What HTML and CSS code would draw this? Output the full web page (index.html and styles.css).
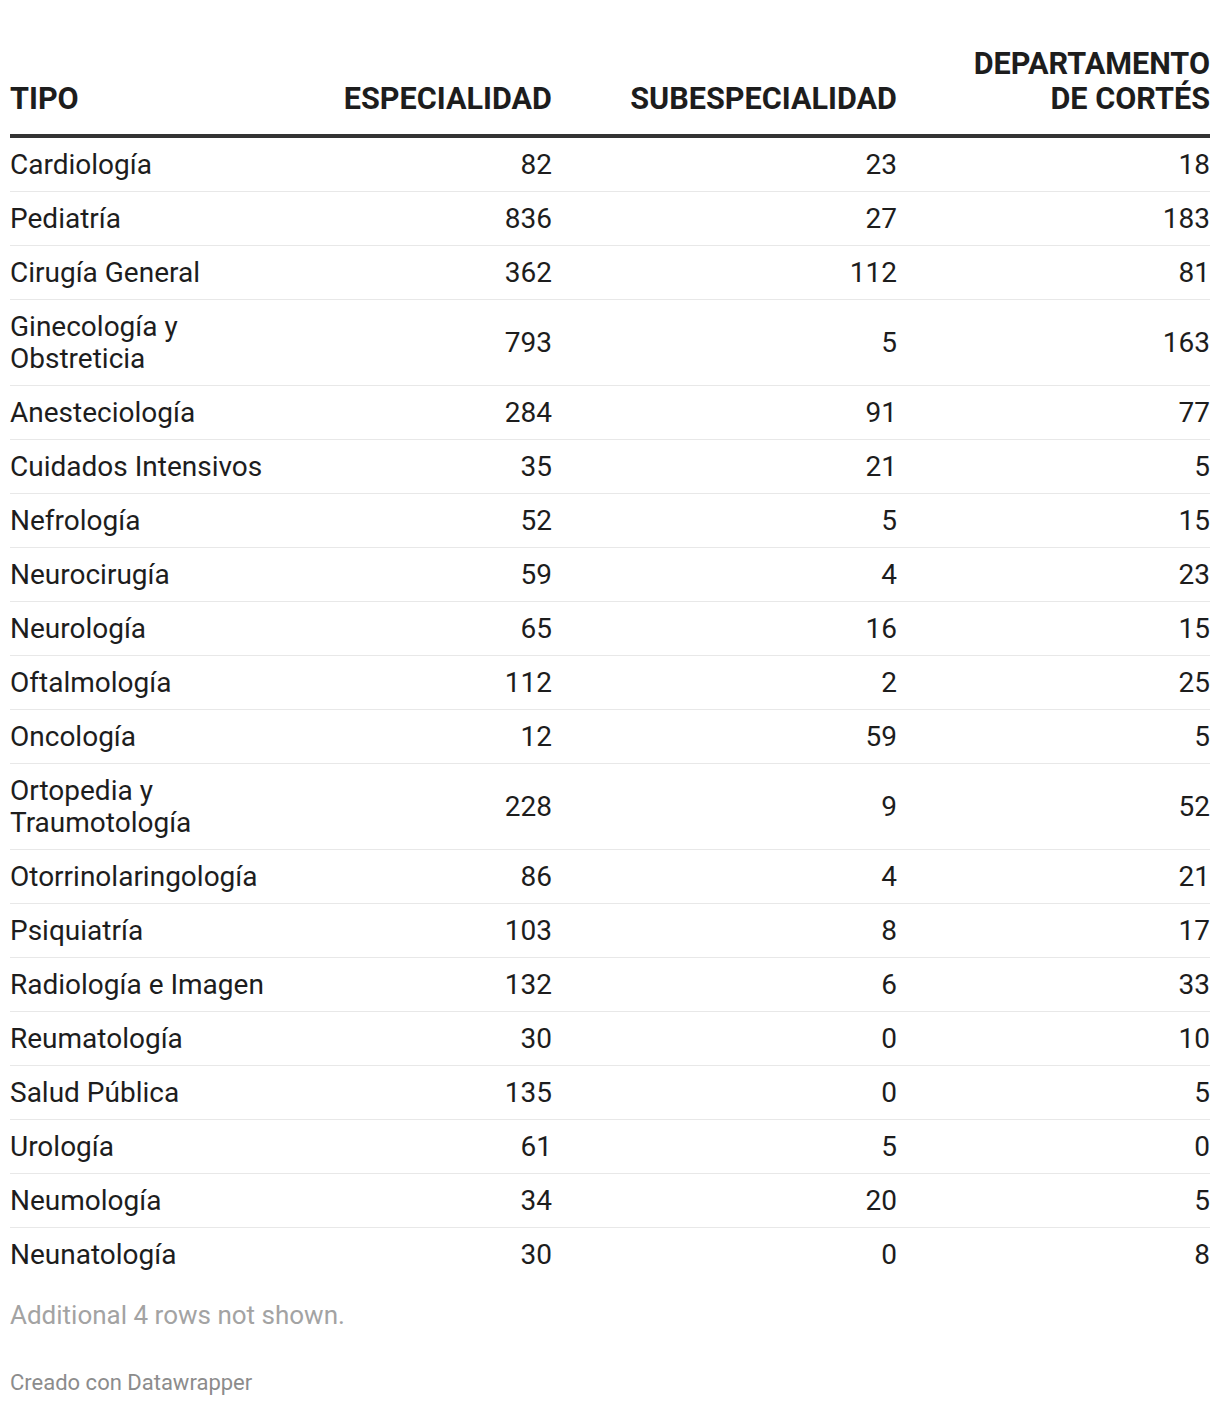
FILE: index.html
```html
<!DOCTYPE html>
<html lang="es">
<head>
<meta charset="utf-8">
<title>Tabla</title>
<link rel="stylesheet" href="styles.css">
</head>
<body>
<div class="chart">
  <table class="tbl">
    <colgroup>
      <col class="c1"><col class="c2"><col class="c3"><col class="c4">
    </colgroup>
    <thead>
      <tr>
        <th class="left">TIPO</th>
        <th>ESPECIALIDAD</th>
        <th>SUBESPECIALIDAD</th>
        <th>DEPARTAMENTO<br>DE CORTÉS</th>
      </tr>
    </thead>
    <tbody>
      <tr><td class="left">Cardiología</td><td>82</td><td>23</td><td>18</td></tr>
      <tr><td class="left">Pediatría</td><td>836</td><td>27</td><td>183</td></tr>
      <tr><td class="left">Cirugía General</td><td>362</td><td>112</td><td>81</td></tr>
      <tr><td class="left">Ginecología y Obstreticia</td><td>793</td><td>5</td><td>163</td></tr>
      <tr><td class="left">Anesteciología</td><td>284</td><td>91</td><td>77</td></tr>
      <tr><td class="left">Cuidados Intensivos</td><td>35</td><td>21</td><td>5</td></tr>
      <tr><td class="left">Nefrología</td><td>52</td><td>5</td><td>15</td></tr>
      <tr><td class="left">Neurocirugía</td><td>59</td><td>4</td><td>23</td></tr>
      <tr><td class="left">Neurología</td><td>65</td><td>16</td><td>15</td></tr>
      <tr><td class="left">Oftalmología</td><td>112</td><td>2</td><td>25</td></tr>
      <tr><td class="left">Oncología</td><td>12</td><td>59</td><td>5</td></tr>
      <tr><td class="left">Ortopedia y Traumotología</td><td>228</td><td>9</td><td>52</td></tr>
      <tr><td class="left">Otorrinolaringología</td><td>86</td><td>4</td><td>21</td></tr>
      <tr><td class="left">Psiquiatría</td><td>103</td><td>8</td><td>17</td></tr>
      <tr><td class="left">Radiología e Imagen</td><td>132</td><td>6</td><td>33</td></tr>
      <tr><td class="left">Reumatología</td><td>30</td><td>0</td><td>10</td></tr>
      <tr><td class="left">Salud Pública</td><td>135</td><td>0</td><td>5</td></tr>
      <tr><td class="left">Urología</td><td>61</td><td>5</td><td>0</td></tr>
      <tr><td class="left">Neumología</td><td>34</td><td>20</td><td>5</td></tr>
      <tr><td class="left">Neunatología</td><td>30</td><td>0</td><td>8</td></tr>
    </tbody>
  </table>
  <p class="more">Additional 4 rows not shown.</p>
  <p class="credit">Creado con Datawrapper</p>
</div>
</body>
</html>
```
FILE: styles.css
```css
html, body {
  margin: 0;
  padding: 0;
  background: #ffffff;
}
body {
  font-family: Roboto, "Liberation Sans", sans-serif;
  color: #1d1d1d;
}
.chart {
  padding: 46px 10px 0 10px;
}
.tbl {
  width: 1200px;
  border-collapse: collapse;
  table-layout: fixed;
  font-size: 28px;
}
.c1 { width: 280px; }
.c2 { width: 262px; }
.c3 { width: 345px; }
.c4 { width: 313px; }
.tbl th {
  font-weight: 700;
  font-size: 30.6px;
  line-height: 35px;
  text-align: right;
  vertical-align: bottom;
  padding: 0 0 18px 0;
  border-bottom: 4px solid #333333;
  color: #1d1d1d;
}
.tbl td {
  text-align: right;
  vertical-align: middle;
  line-height: 32px;
  padding: 11px 0 10px 0;
  border-bottom: 1px solid #e8e8e8;
}
.tbl tbody tr:last-child td {
  border-bottom: none;
}
.tbl .left {
  text-align: left;
}
.more {
  margin: 18px 0 0 0;
  font-size: 26px;
  line-height: 32px;
  color: #a3a3a3;
}
.credit {
  margin: 38px 0 0 0;
  font-size: 22px;
  line-height: 28px;
  color: #8c8c8c;
}
```
